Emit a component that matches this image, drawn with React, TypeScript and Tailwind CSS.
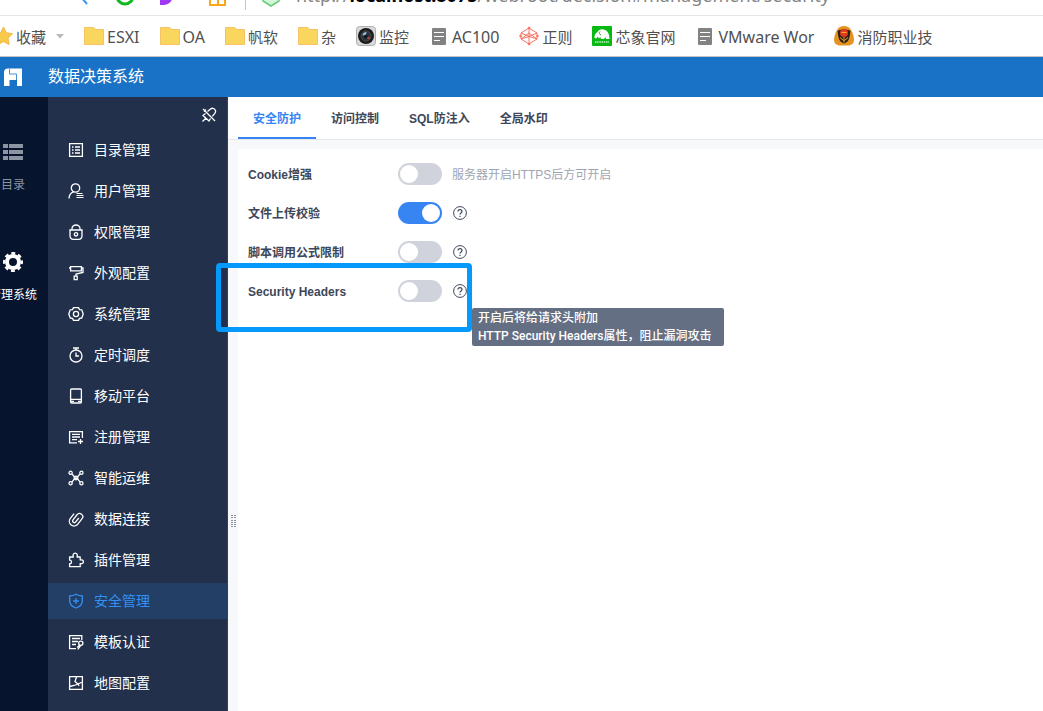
import React from 'react';

const Svg: React.FC<{ size?: number; children: React.ReactNode }> = ({ size = 16, children }) => (
    <svg width={size} height={size} viewBox="0 0 16 16" fill="none" stroke="currentColor" strokeWidth="1.3" className="shrink-0" aria-hidden="true">
        {children}
    </svg>
);

// Bookmark bar icons, all in a 20px box
const FolderIcon = () => (
    <svg width="20" height="20" viewBox="0 0 20 20" className="shrink-0" aria-hidden="true">
        <path d="M.5 1.500h9l2.500 2h7.500v15H.5z" fill="#f9d65d" stroke="#f7c266" />
    </svg>
);

const DocIcon = () => (
    <svg width="20" height="20" viewBox="0 0 20 20" className="shrink-0" aria-hidden="true">
        <rect x="3" y="2" width="14" height="17" rx="1" fill="#828282" />
        <path d="M5 6.500h10M5 10.500h10M5 14.500h6" stroke="#fff" />
    </svg>
);

const CameraIcon = () => (
    <svg width="20" height="20" viewBox="0 0 20 20" className="shrink-0" aria-hidden="true">
        <rect x=".5" y=".5" width="19" height="19" rx="3" fill="#d9d9d9" stroke="#b0b0b0" />
        <circle cx="10" cy="10" r="8" fill="#1b1b1d" />
        <circle cx="10" cy="10" r="5" fill="#2c323b" stroke="#4b4b50" />
        <path d="M6.500 9.500a4 4 0 0 1 4-3.500l-.5 3z" fill="#9ec4dc" />
        <circle cx="10" cy="10.500" r="2" fill="#0b1c2b" />
        <circle cx="12.500" cy="12" r="1.300" fill="#b8473c" />
    </svg>
);

const RegexIcon = () => (
    <svg width="20" height="20" viewBox="0 0 20 20" fill="none" stroke="#fb7060" className="shrink-0" aria-hidden="true">
        <path d="M10 2l8 5v6l-8 5-8-5V7z M2 7l8 3.500L18 7M2 13l8-2.500 8 2.500M10 2v5l8 6M10 7l-8 6M10 7v11" />
        <g fill="#fb7060" stroke="none">
            <circle cx="10" cy="2" r="1.300" />
            <circle cx="10" cy="18" r="1.300" />
            <circle cx="1.500" cy="10" r="1.200" />
            <circle cx="18.500" cy="10" r="1.200" />
        </g>
    </svg>
);

const ElephantIcon = () => (
    <svg width="20" height="20" viewBox="0 0 20 20" className="shrink-0" aria-hidden="true">
        <rect width="20" height="20" rx="1" fill="#08b913" />
        <path d="M2.500 12c-.3-3 1-5 3-6 1-2 3.500-3.200 6-2.500 4 .8 6 4.500 6 9.500h-3.500l-.5-2-1.500 2H9l-.8-2-1.200 1.500-1.500-2-1 2z" fill="#fff" />
        <path d="M8 5.500c-1.200 1.500-.5 3 1 3.500" stroke="#08b913" fill="none" />
        <path d="M3 16h14" stroke="#bdeec0" strokeWidth="1.500" strokeDasharray="1.500 .7" />
    </svg>
);

const BadgeIcon = () => (
    <svg width="20" height="20" viewBox="0 0 20 20" className="shrink-0" aria-hidden="true">
        <path d="M10 0c3 0 5.500 1.500 7 4 2 3.500 3 7 3 10 0 3-2 5-5 5.500H5C2 19 0 17 0 14c0-3 1-6.500 3-10 1.500-2.500 4-4 7-4z" fill="#e59320" />
        <path d="M3.500 5c2-2 11-2 13 0-.5 3-.5 4-1 6-.5 3.500-2.500 5.500-5.500 6.500-3-1-5-3-5.500-6.500-.5-2-.5-3-1-6z" fill="#2b211c" />
        <circle cx="10" cy="7" r="4" fill="#e23a1f" />
        <path d="M7.500 6.500h5M10 11v5.500M6 11.500l3.500 3M14 11.500l-3.500 3" stroke="#f5a623" />
    </svg>
);

const bookmarks = [
    { label: 'ESXI', icon: <FolderIcon />, latin: true },
    { label: 'OA', icon: <FolderIcon />, latin: true },
    { label: '帆软', icon: <FolderIcon /> },
    { label: '杂', icon: <FolderIcon /> },
    { label: '监控', icon: <CameraIcon /> },
    { label: 'AC100', icon: <DocIcon />, latin: true },
    { label: '正则', icon: <RegexIcon /> },
    { label: '芯象官网', icon: <ElephantIcon /> },
    { label: 'VMware Wor', icon: <DocIcon />, latin: true },
    { label: '消防职业技', icon: <BadgeIcon /> },
];

const menu = [
    { label: '目录管理', icon: <Svg><path d="M1.600 1.600h12.800v12.800H1.600zM4 5h1.500M7 5h5M4 8h1.500M7 8h5M4 11h1.500M7 11h5" /></Svg> },
    { label: '用户管理', icon: <Svg><circle cx="7.500" cy="5" r="4.200" /><path d="M1 15.500c.2-3.500 2-5.800 4.600-6.600" /><path d="M8.500 10.500h6M8.500 12.500h7M8.500 14.500h7" strokeWidth="1" /></Svg> },
    { label: '权限管理', icon: <Svg><path d="M4 6V4.500a4 3.500 0 0 1 8 0V6M1.300 6h13.400M2 6v5.500c0 2.500 1.300 3.800 3.300 3.800h5.400c2 0 3.300-1.300 3.300-3.800V6" /><circle cx="8" cy="10.300" r="1.700" /></Svg> },
    { label: '外观配置', icon: <Svg><path d="M2.600 1.600h10.800v4.200H2.600zM2.600 3H1M13.400 3h1.600v4.500L8 9v2M6.200 11.200h3v3.500h-3z" /></Svg> },
    { label: '系统管理', icon: <Svg><path d="M5.500 1.600h5l1 2 2.300.3 1.400 4.100-1.400 4-2.300.4-1 2h-5l-1-2-2.300-.4L.8 8l1.400-4.100 2.300-.3z" strokeLinejoin="round" /><circle cx="8" cy="8" r="2.600" /></Svg> },
    { label: '定时调度', icon: <Svg><circle cx="8" cy="9" r="6" /><path d="M8 5.500V9h3M5 1h6M8 1v2" /></Svg> },
    { label: '移动平台', icon: <Svg><rect x="2.600" y="1" width="10.800" height="14" rx="1" /><path d="M2.600 11.300h10.800M2.600 13.300h3.400M10 13.300h3.400" /></Svg> },
    { label: '注册管理', icon: <Svg><path d="M14.400 9V2.600H1.600v11.200H9M4 5.300h8M4 8h8M4 10.700h5M12.500 10v5M10 12.500h5" /></Svg> },
    { label: '智能运维', icon: <Svg><path d="M4 3.800L6.500 7h3L12 3.800M4 12.200l2.500-3.500h3l2.500 3.500" /><circle cx="2.600" cy="2.800" r="1.600" /><circle cx="13.400" cy="2.800" r="1.600" /><circle cx="2.600" cy="13.200" r="1.600" /><circle cx="13.400" cy="13.200" r="1.600" /><circle cx="8" cy="8" r="1.800" /></Svg> },
    { label: '数据连接', icon: <Svg><path d="M9.600 5.500v5a1.700 1.700 0 0 1-3.400 0V4a3.200 3.200 0 0 1 6.400 0v7a4.700 4.700 0 0 1-9.400 0V5" transform="rotate(38 8 8)" /></Svg> },
    { label: '插件管理', icon: <Svg><path d="M1.600 5h3.800c-.8-2 0-3.800 1.800-3.800S9.800 3 9 5h3.200v3c2-.6 3.200.3 3.200 1.800s-1.400 2.300-3.200 1.700v3.200H1.600v-3c2.500.4 2.500-4 0-3.500z" strokeLinejoin="round" /></Svg> },
    { label: '安全管理', active: true, icon: <Svg><path d="M8 1.200c2 1.200 4 1.600 6.300 1.700V8c0 3.500-2.500 5.700-6.300 7C4.200 13.700 1.700 11.500 1.700 8V2.900C4 2.800 6 2.400 8 1.200zM8 5v6M5 8h6" /></Svg> },
    { label: '模板认证', icon: <Svg><path d="M13.800 6V1.600H1.600v13H8M4 4.500h8M4 7.500h6M4 10.500h4" /><circle cx="12.800" cy="9.300" r="2.100" /><path d="M11.800 11l-2.600 2.500M12.800 11.400l-3 4" /></Svg> },
    { label: '地图配置', icon: <Svg><path d="M1.600 1.600h12.800v12.800H1.600zM8.500 2L7 6.500l3 2.500 4.500-2M1.600 11.500l4.500-1 4 -1.500M10 9l1 2" /></Svg> },
];

const tabs = ['安全防护', '访问控制', 'SQL防注入', '全局水印'];

const HelpButton: React.FC<{ label: string }> = ({ label }) => (
    <button type="button" aria-label={label} className="ml-[11px] text-[#3d4759]">
        <svg width="14" height="14" viewBox="0 0 14 14" fill="none" stroke="currentColor" aria-hidden="true">
            <circle cx="7" cy="7" r="6.400" />
            <path d="M5 5.600c0-2.600 4-2.600 4 0C9 7 7 6.800 7 8.500M7 9.800v1.200" strokeWidth="1.200" />
        </svg>
    </button>
);

const SettingRow: React.FC<{ id: string; label: string; checked?: boolean; children?: React.ReactNode }> = ({ id, label, checked, children }) => (
    <div className="relative flex h-[22px] items-center">
        <label htmlFor={id} className="w-[150px] shrink-0 pt-0.5 font-semibold">{label}</label>
        <input
            id={id}
            type="checkbox"
            role="switch"
            defaultChecked={checked}
            className="relative h-[22px] w-11 shrink-0 appearance-none rounded-full bg-[#d0d3db] before:absolute before:top-0.5 before:left-0.5 before:size-[18px] before:rounded-full before:bg-white checked:bg-[#3685f2] checked:before:left-6"
        />
        {children}
    </div>
);

const App: React.FC = () => {
    return (
        <div className="flex h-screen flex-col overflow-hidden bg-white font-['Liberation_Sans','Noto_Sans_CJK_SC',sans-serif]">
            {/* Address bar */}
            <div className="flex h-4 shrink-0 items-end overflow-hidden border-b border-[#e5e5e5] pb-2.5">
                <div className="flex h-5 w-full shrink-0 items-center">
                    <svg width="296" height="30" viewBox="0 0 296 30" fill="none" className="shrink-0" aria-hidden="true">
                        <path d="M87 10l-6 7 6 7" stroke="#3b94f7" strokeWidth="2" />
                        <circle cx="125" cy="16" r="8" stroke="#12b81f" strokeWidth="3" />
                        <path d="M160 8h4a8.500 8.500 0 0 1 0 17h-4z" fill="#a238f7" />
                        <path d="M210 9h15v16h-15zM218 9v16M210 17h15" stroke="#fba614" strokeWidth="2" />
                        <path d="M245.500 0v30" stroke="#c8c8c8" />
                        <path d="M263 12l8-5 8 5v9l-8 5-8-5z" fill="#d3f8d7" stroke="#6cc97b" strokeWidth="1.500" />
                    </svg>
                    <div className="font-['Noto_Sans'] text-lg leading-5 whitespace-nowrap text-[#858585]">
                        http://<b className="text-black">localhost:8075</b>/webroot/decision#management/security
                    </div>
                </div>
            </div>

            {/* Bookmarks */}
            <nav className="flex h-[41px] shrink-0 items-center gap-5 overflow-hidden border-b border-[#c4c4c4] font-['Noto_Sans','Noto_Sans_CJK_SC',sans-serif] text-[15px] text-[#505050]">
                <button type="button" className="-ml-2 flex shrink-0 items-center gap-[3px]">
                    <svg width="21" height="20" viewBox="0 0 21 20" aria-hidden="true">
                        <path d="M11.500 1l2.800 5.800 6.200.9-4.500 4.400 1.100 6.400-5.600-3-5.600 3L7 12.100 2.500 7.700l6.200-.9z" fill="#f8ca4c" stroke="#f5b33c" />
                    </svg>
                    <span className="pt-0.5">收藏</span>
                    <svg width="8" height="5" viewBox="0 0 8 5" className="ml-[7px]" aria-hidden="true">
                        <path d="M0 0h8L4 4.500z" fill="#b9b9b9" />
                    </svg>
                </button>
                {bookmarks.map((b) => (
                    <a key={b.label} href="#" className="flex shrink-0 items-center gap-[3px] whitespace-nowrap">
                        {b.icon}
                        <span className={b.latin ? 'pt-0.5 text-base' : 'pt-0.5'}>{b.label}</span>
                    </a>
                ))}
            </nav>

            <header className="flex h-10 shrink-0 items-center bg-[#1a72c7] text-white">
                <svg width="48" height="40" viewBox="0 0 48 40" aria-hidden="true">
                    <path d="M8 11.500h14v17.500h-5v-6H9.500v6H4V15.500a4 4 0 0 1 4-4z" fill="#fff" />
                    <path d="M9.500 12v5h7v6" fill="none" stroke="#1a72c7" strokeWidth=".8" />
                </svg>
                <h1 className="text-base">数据决策系统</h1>
            </header>

            <div className="flex min-h-0 flex-1">
                {/* Rail */}
                <nav className="flex w-12 shrink-0 justify-end overflow-hidden bg-[#06142e] pt-[45px] text-xs">
                    <div className="flex w-[70px] shrink-0 flex-col gap-[58px]">
                        <a href="#" className="flex flex-col items-center gap-3.5 text-[#8c93a1]">
                            <svg width="20" height="20" viewBox="0 0 20 20" fill="currentColor" aria-hidden="true">
                                <path d="M0 2h5v4H0zM6 2h14v4H6zM0 8h5v4H0zM6 8h14v4H6zM0 14h5v4H0zM6 14h14v4H6z" />
                            </svg>
                            <span className="leading-[18px]">目录</span>
                        </a>
                        <a href="#" className="flex flex-col items-center gap-3.5 whitespace-nowrap text-white">
                            <svg width="20" height="20" viewBox="0 0 20 20" fill="none" stroke="currentColor" aria-hidden="true">
                                <circle cx="10" cy="10" r="6" strokeWidth="4" />
                                <circle cx="10" cy="10" r="8.800" strokeWidth="2.400" strokeDasharray="3.900 3.010" strokeDashoffset="1.950" />
                            </svg>
                            <span className="leading-[18px]">管理系统</span>
                        </a>
                    </div>
                </nav>

                {/* Side menu */}
                <aside className="w-[180px] shrink-0 overflow-hidden border-r border-[#34415a] bg-[#22304b] text-sm text-white">
                    <div className="flex h-[35px] items-center justify-end pr-2.5">
                        <button type="button" aria-label="取消固定">
                            <Svg>
                                <path d="M2 2l12 12M6.500 4.500l3-2.500c1.500-1.200 3.500-.8 4.300.3 1 1.200 1 2.700 0 4l-2.500 3M4.500 6.500L2 8.500 8 14l1.500-2.500M5 11l-3.500 3.500M5 2.500L3 4.500" />
                            </Svg>
                        </button>
                    </div>
                    <ul className="flex flex-col gap-[5px]">
                        {menu.map((m) => (
                            <li key={m.label}>
                                <a href="#" className={`flex h-9 items-center gap-2.5 pl-5 ${m.active ? 'bg-[#233f65] text-[#3490f6]' : ''}`}>
                                    {m.icon}
                                    {m.label}
                                </a>
                            </li>
                        ))}
                    </ul>
                </aside>

                {/* Content */}
                <main className="flex min-w-0 flex-1 flex-col bg-[#f7f8fa] text-xs text-[#3d4759]">
                    <div role="tablist" className="flex h-[43px] shrink-0 border-b border-[#e6e8ec] bg-white pl-2.5">
                        {tabs.map((t, i) => (
                            <button
                                key={t}
                                type="button"
                                role="tab"
                                aria-selected={i === 0}
                                className={`border-b-2 px-[15px] pt-1 font-semibold ${i === 0 ? 'border-[#3685f2] text-[#3685f2]' : 'border-transparent'}`}
                            >
                                {t}
                            </button>
                        ))}
                    </div>
                    <div className="flex min-h-0 flex-1 pt-[9px]">
                        <div className="flex w-2.5 shrink-0 items-center justify-center">
                            <svg width="5" height="13" viewBox="0 0 5 13" fill="#8b93a3" className="mb-[-182px]" aria-hidden="true">
                                <path d="M0 0h2v1H0zM3 0h2v1H3zM0 2h2v1H0zM3 2h2v1H3zM0 5h2v1H0zM3 5h2v1H3zM0 7h2v1H0zM3 7h2v1H3zM0 9h2v1H0zM3 9h2v1H3zM0 11h2v1H0zM3 11h2v1H3z" />
                            </svg>
                        </div>
                        <section className="flex flex-1 flex-col gap-[17px] bg-white px-2.5 pt-3.5">
                            <SettingRow id="cookie" label="Cookie增强">
                                <span className="ml-2.5 pt-0.5 text-[#9ea5b2]">服务器开启HTTPS后方可开启</span>
                            </SettingRow>
                            <SettingRow id="upload" label="文件上传校验" checked>
                                <HelpButton label="文件上传校验说明" />
                            </SettingRow>
                            <SettingRow id="script" label="脚本调用公式限制">
                                <HelpButton label="脚本调用公式限制说明" />
                            </SettingRow>
                            <SettingRow id="headers" label="Security Headers">
                                <HelpButton label="Security Headers说明" />
                                <div role="tooltip" className="absolute top-7 left-56 rounded-xs bg-[#656f84] py-px pr-3 pl-1.5 font-['Roboto','Noto_Sans_CJK_SC',sans-serif] leading-[18px] font-medium whitespace-nowrap text-white">
                                    开启后将给请求头附加
                                    <br />
                                    HTTP Security Headers属性，阻止漏洞攻击
                                </div>
                                <div className="pointer-events-none absolute -top-[17px] -left-8 h-[69px] w-64 rounded-sm border-5 border-[#0599fb]" />
                            </SettingRow>
                        </section>
                    </div>
                </main>
            </div>
        </div>
    );
};

export default App;
